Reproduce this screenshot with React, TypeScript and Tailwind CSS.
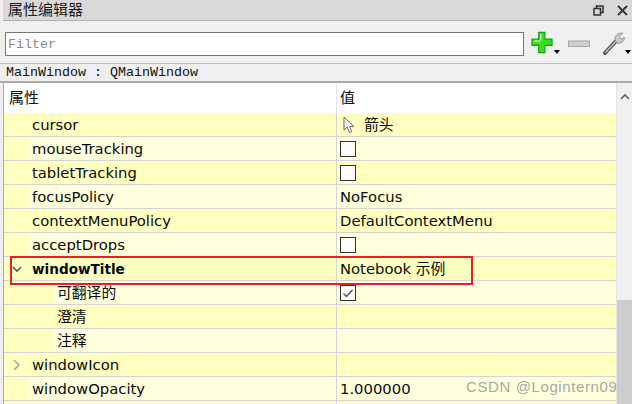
import React from "react";

const ui = "font-['DejaVu_Sans','Noto_Sans_CJK_SC',sans-serif]";
const mono = "font-['Liberation_Mono','Noto_Sans_CJK_SC',monospace]";

type Row = {
  name: string;
  indent?: number;
  bold?: boolean;
  arrow?: "open" | "closed";
  value?: string;
  check?: "on" | "off";
  cursor?: boolean;
};

const rows: Row[] = [
  { name: "cursor", value: "箭头", cursor: true },
  { name: "mouseTracking", check: "off" },
  { name: "tabletTracking", check: "off" },
  { name: "focusPolicy", value: "NoFocus" },
  { name: "contextMenuPolicy", value: "DefaultContextMenu" },
  { name: "acceptDrops", check: "off" },
  { name: "windowTitle", bold: true, arrow: "open", value: "Notebook 示例" },
  { name: "可翻译的", indent: 1, check: "on" },
  { name: "澄清", indent: 1 },
  { name: "注释", indent: 1 },
  { name: "windowIcon", arrow: "closed" },
  { name: "windowOpacity", value: "1.000000" },
  { name: "" },
];

function Checkbox({ on }: { on: boolean }) {
  return (
    <div className="w-4 h-4 border-[1.5px] border-[#333333] bg-[#fcfcfc] flex items-center justify-center">
      {on && (
        <svg width="12" height="12" viewBox="0 0 12 12" fill="none">
          <path d="M1.5 6.5 L4.5 9.5 L10.5 3" stroke="#555555" strokeWidth="1.5" />
        </svg>
      )}
    </div>
  );
}

function PropRow({ row, dark }: { row: Row; dark: boolean }) {
  const bg = dark ? "bg-[#ffffbf]" : "bg-[#ffffdc]";
  return (
    <div className={`flex h-6 border-b border-[#d4d4d4] ${bg} text-[14.8px] text-[#0a0a0a]`}>
      <div className="w-[333px] flex border-r border-[#d4d4d4]">
        <div className={`${row.indent ? "w-[50px]" : "w-[25px]"} shrink-0 bg-[#ffffbf] flex items-center pl-2`}>
          {row.arrow === "open" && (
            <svg width="10" height="10" viewBox="0 0 10 10" fill="none">
              <path d="M1 3 L5 7 L9 3" stroke="#555555" strokeWidth="1.6" />
            </svg>
          )}
          {row.arrow === "closed" && (
            <svg width="10" height="12" viewBox="0 0 10 12" fill="none">
              <path d="M2 1 L7 6 L2 11" stroke="#a8a8a8" strokeWidth="1.6" />
            </svg>
          )}
        </div>
        <div className={`pl-[3px] pt-[2px] flex items-center ${row.bold ? "font-bold text-[13.6px]" : ""}`}>{row.name}</div>
      </div>
      <div className="flex-1 flex items-center pl-[3px]">
        {row.cursor && (
          <svg width="14" height="18" viewBox="0 0 14 18" className="ml-0.5 mr-[8px]">
            <path d="M2 1 V14 L5.2 11 L7.6 16.5 L9.8 15.5 L7.4 10.4 L11.8 10.4 Z" fill="#ffffff" stroke="#666666" strokeWidth="1" />
          </svg>
        )}
        {row.check && <Checkbox on={row.check === "on"} />}
        {row.value && <span className="pt-[2px]">{row.value}</span>}
      </div>
    </div>
  );
}

export default function App() {
  return (
    <div className={`relative w-[632px] h-[404px] overflow-hidden bg-[#f0f0f0] ${ui}`}>
      {/* title bar */}
      <div className="h-[21px] ml-[3px] bg-[#d9d9d9] border-b border-[#b4b4b4] flex items-center justify-between pl-[5px] pr-[4px]">
        <span className="text-[15px] text-[#1a1a1a]">属性编辑器</span>
        <div className="flex items-center gap-[13px]">
          <svg width="11" height="11" viewBox="0 0 11 11" fill="none" stroke="#333333" strokeWidth="1.5">
            <rect x="1" y="3.5" width="6.5" height="6.5" />
            <path d="M3.5 3 V1 H10 V7.5 H8" />
          </svg>
          <svg width="11" height="11" viewBox="0 0 11 11" fill="none" stroke="#333333" strokeWidth="1.8">
            <path d="M1 1 L10 10 M10 1 L1 10" />
          </svg>
        </div>
      </div>

      {/* filter + tool buttons */}
      <div className="h-[43px] flex items-center pl-[5px] border-b border-[#bdbdbd]">
        <div className={`w-[519px] h-[24px] mt-[4px] bg-white border border-[#767676] flex items-center pl-[2px] pt-[1px] text-[13.33px] text-[#8a8a8a] ${mono}`}>
          Filter
        </div>
        <div className="relative w-[24px] h-[24px] ml-[7px] mt-[1px]">
          <svg width="23" height="23" viewBox="0 0 24 24">
            <path d="M8 1.5 H14.5 V8.5 H22 V15 H14.5 V22.5 H8 V15 H1 V8.5 H8 Z" fill="#35e01f" stroke="#12a010" strokeWidth="1.2" />
            <path d="M9.5 3 H11 V10 H3 V11.5 H9.5 Z" fill="#c2f7b4" />
          </svg>
        </div>
        <svg width="6" height="4" viewBox="0 0 6 4" className="mt-[20px] -ml-[1px]"><path d="M0 0 H6 L3 4 Z" fill="#000000" /></svg>
        <svg width="24" height="8" viewBox="0 0 24 8" className="ml-[8px] mt-[3px]">
          <rect x="0.5" y="1" width="21" height="5.5" fill="#cfcfcf" stroke="#a6a6a6" />
        </svg>
        <svg width="24" height="24" viewBox="0 0 24 24" className="ml-[10px] mt-[2px]">
          <path d="M3 22 L15 9" stroke="#555555" strokeWidth="4" strokeLinecap="round" />
          <path d="M3.5 21.5 L15 9" stroke="#c4c4c4" strokeWidth="1.4" />
          <path d="M13 9 C12.5 5 16 1.5 20.5 2 L17.5 5.5 L19 8 L22.5 6.5 C22.5 10.5 18 13.5 15 12 Z" fill="#c8c8c8" stroke="#8a8a8a" strokeWidth="0.8" />
        </svg>
        <svg width="6" height="4" viewBox="0 0 6 4" className="mt-[20px] -ml-[1px]"><path d="M0 0 H6 L3 4 Z" fill="#000000" /></svg>
      </div>

      {/* object class */}
      <div className={`h-[19px] pl-[6px] pt-[1px] flex items-center text-[13.33px] text-[#111111] border-b-2 border-[#a9a9a9] ${mono}`}>
        MainWindow : QMainWindow
      </div>

      {/* property tree */}
      <div className="flex ml-[3px] border-l border-[#a9a9a9] h-[400px]">
        <div className="w-[612px] flex flex-col">
          <div className="h-[30px] shrink-0 bg-white flex text-[15px] text-[#0a0a0a]">
            <div className="w-[333px] pl-[5px] flex items-center border-r border-[#e5e5e5]">属性</div>
            <div className="pl-[3px] flex items-center">值</div>
          </div>
          {rows.map((r, i) => (
            <PropRow key={i} row={r} dark={i % 2 === 0} />
          ))}
        </div>
        {/* scrollbar */}
        <div className="w-[16px] flex flex-col border-l border-[#e5e5e5]">
          <div className="h-[217px] flex justify-center pt-[10px]">
            <svg width="10" height="8" viewBox="0 0 10 8" fill="none">
              <path d="M1 6 L5 2 L9 6" stroke="#606060" strokeWidth="1.6" />
            </svg>
          </div>
          <div className="flex-1 bg-[#cdcdcd]" />
        </div>
      </div>

      {/* red highlight + watermark lie over the tree */}
      <div className="absolute left-[10px] top-[256px] w-[463px] h-[29px] border-2 border-[#ee1c25]" />
      <div className="absolute left-[466px] top-[376px] text-[15px] text-[#a8a8a8] font-['Liberation_Sans',sans-serif] tracking-[0.6px]">
        CSDN @Logintern09
      </div>
    </div>
  );
}
